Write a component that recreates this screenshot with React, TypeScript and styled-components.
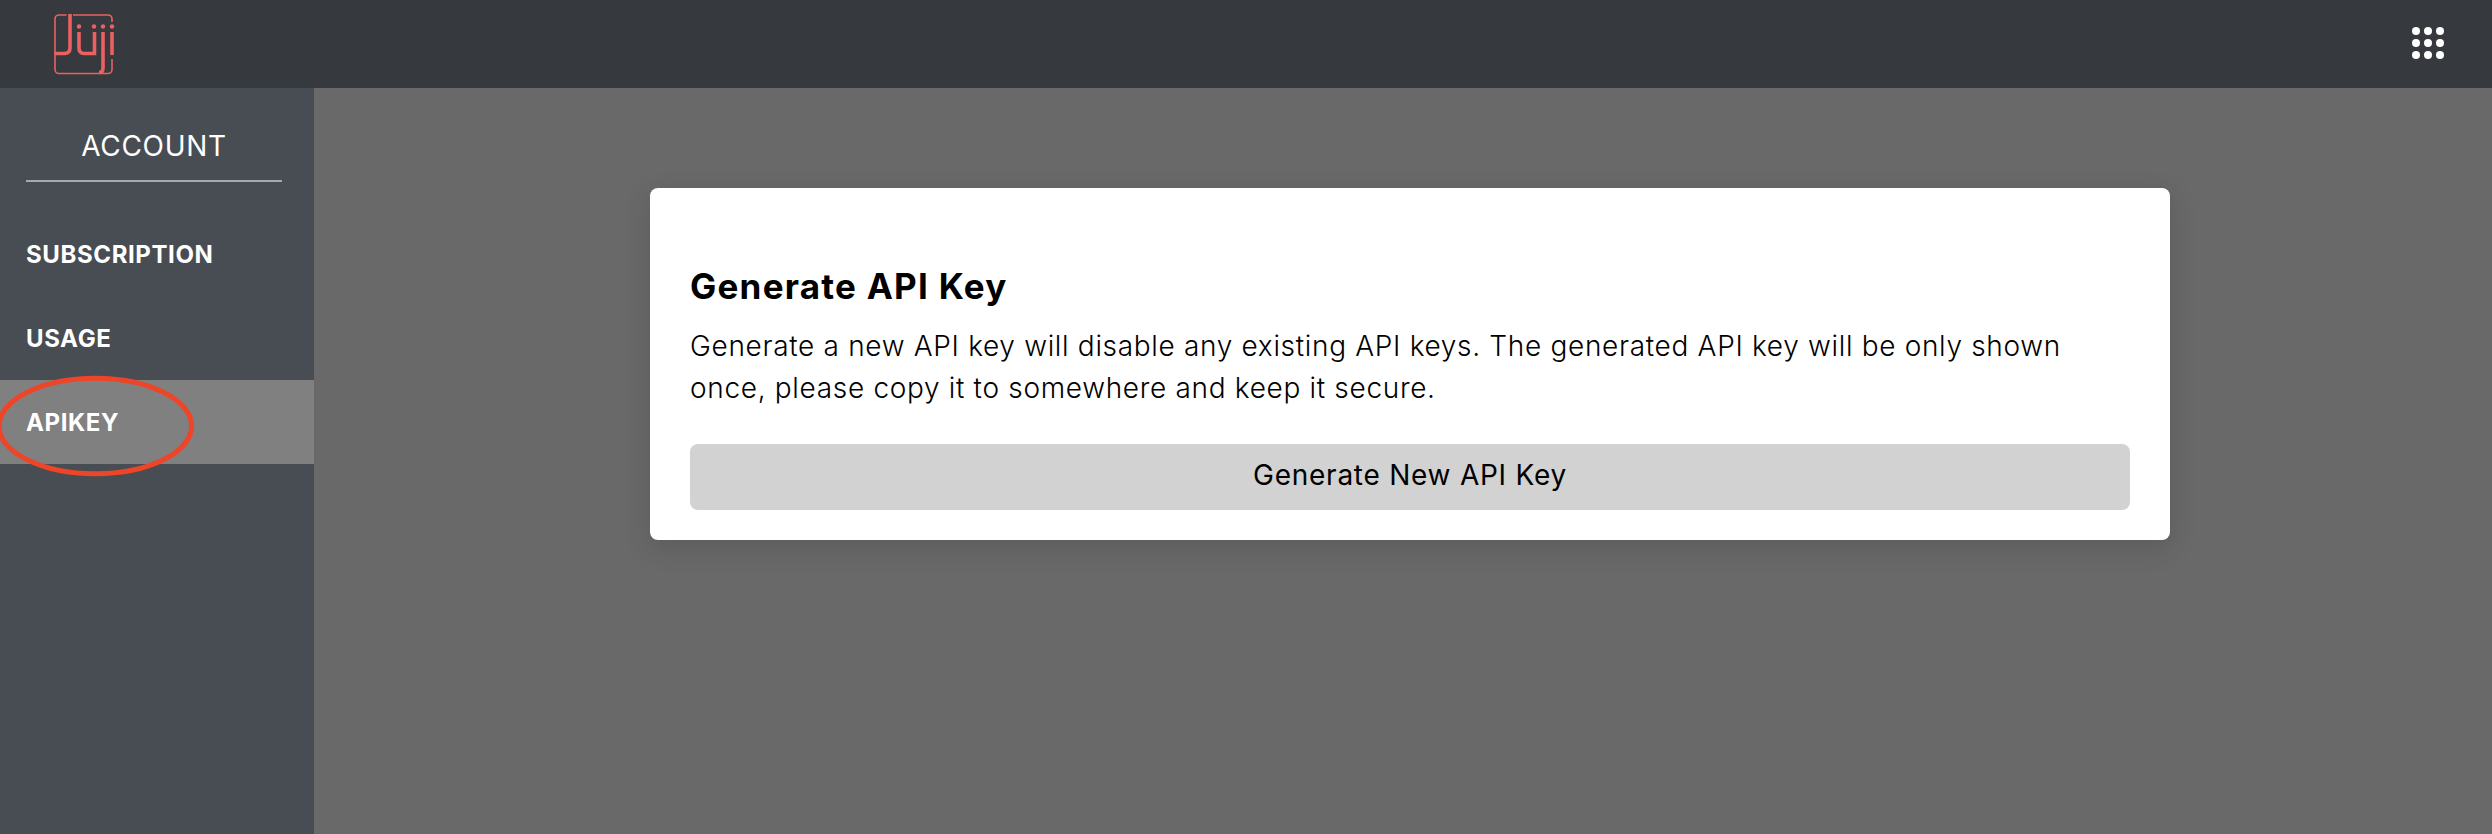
import React from "react";
import styled, { createGlobalStyle } from "styled-components";

const GlobalStyle = createGlobalStyle`
  * { box-sizing: border-box; }
  body { margin: 0; font-family: Inter, "Liberation Sans", sans-serif; color: #000; background: #696969; }
`;

const Page = styled.div`
  position: relative;
  display: flex;
  flex-direction: column;
  height: 834px;
  overflow: hidden;
`;

const Header = styled.header`
  display: flex;
  justify-content: space-between;
  align-items: flex-start;
  flex: none;
  height: 88px;
  padding: 14px 48px 0 53px;
  background: #363a3e;
`;

const Logo = styled.svg`
  width: 62px;
  height: 62px;
`;

const AppsButton = styled.button`
  display: grid;
  grid-template-columns: repeat(3, 8px);
  gap: 4px;
  margin: 13px 0 0;
  padding: 0;
  border: 0;
  background: none;
`;

const Dot = styled.span`
  width: 8px;
  height: 8px;
  border-radius: 50%;
  background: #fff;
`;

const Body = styled.div`
  display: flex;
  flex: 1;
`;

const Sidebar = styled.aside`
  flex: none;
  width: 314px;
  color: #fff;
  background: #484c53;
`;

const SidebarTitle = styled.h1`
  height: 94px;
  margin: 0 32px 30px 26px;
  padding-top: 37px;
  border-bottom: 2px solid #a9a9a9;
  font-size: 28px;
  font-weight: 400;
  line-height: 42px;
  letter-spacing: 0.7px;
  text-align: center;
`;

const NavItem = styled.a<{ $active?: boolean }>`
  display: flex;
  align-items: center;
  height: 84px;
  padding: 0 26px;
  background: ${(p) => (p.$active ? "#808080" : "transparent")};
  font-size: 24px;
  font-weight: 700;
  letter-spacing: 0.6px;
`;

const Main = styled.main`
  display: flex;
  flex: 1;
  justify-content: center;
  align-items: flex-start;
  padding-top: 100px;
  background: #696969;
`;

const Card = styled.section`
  width: 1520px;
  height: 352px;
  margin-left: 14px;
  padding: 76px 40px 30px;
  border-radius: 8px;
  background: #fff;
  box-shadow: 0 8px 24px rgba(46, 46, 56, 0.22);
`;

const CardTitle = styled.h2`
  margin: 0;
  font-size: 35px;
  font-weight: 650;
  line-height: 44px;
  letter-spacing: 1.25px;
`;

const CardText = styled.p`
  margin: 17px 0 0;
  font-size: 28px;
  font-weight: 300;
  line-height: 42px;
  letter-spacing: 0.68px;
  white-space: nowrap;
`;

const GenerateButton = styled.button`
  display: block;
  width: 100%;
  height: 66px;
  margin: 35px 0 0;
  padding: 0 0 5px;
  border: 0;
  border-radius: 8px;
  background: #d2d2d2;
  color: #000;
  font-family: inherit;
  font-size: 28px;
  font-weight: 400;
  letter-spacing: 0.75px;
`;

const Highlight = styled.svg`
  position: absolute;
  left: 0;
  top: 370px;
  width: 200px;
  height: 112px;
  pointer-events: none;
`;

const navItems = ["SUBSCRIPTION", "USAGE", "APIKEY"];

export default function App() {
  return (
    <Page>
      <GlobalStyle />
      <Header>
        <Logo viewBox="0 0 62 62" fill="none" stroke="#ec6062" role="img" aria-label="Juji">
          <path d="M13.500 1H6a4 4 0 0 0-4 4v50.500a4 4 0 0 0 4 4h41" strokeWidth="1.6" />
          <path d="M20 1h35a4 4 0 0 1 4 4v3M59 45v10.500a4 4 0 0 1-4 4h-8" strokeWidth="1.6" />
          <path d="M17 0v34q0 5.500-5.500 5.500H1.500M26 18v16q0 5.500 5 5.500h10.500V18" strokeWidth="3.6" />
          <path d="M50 18v36q0 4.500-4 4.500M59 18v23" strokeWidth="3.600" />
          <g fill="#ec6062" stroke="none">
            <circle cx="26" cy="12.500" r="2.200" />
            <circle cx="41" cy="12.500" r="2.200" />
            <circle cx="50" cy="12.500" r="2.200" />
            <circle cx="59" cy="12.500" r="2.200" />
          </g>
        </Logo>
        <AppsButton aria-label="Apps">
          {Array.from({ length: 9 }, (_, i) => (
            <Dot key={i} />
          ))}
        </AppsButton>
      </Header>
      <Body>
        <Sidebar>
          <SidebarTitle>ACCOUNT</SidebarTitle>
          <nav>
            {navItems.map((item) => (
              <NavItem key={item} $active={item === "APIKEY"}>
                {item}
              </NavItem>
            ))}
          </nav>
        </Sidebar>
        <Main>
          <Card>
            <CardTitle>Generate API Key</CardTitle>
            <CardText>
              Generate a new API key will disable any existing API keys. The generated API key will be only shown
              <br />
              once, please copy it to somewhere and keep it secure.
            </CardText>
            <GenerateButton>Generate New API Key</GenerateButton>
          </Card>
        </Main>
      </Body>
      <Highlight viewBox="0 0 200 112">
        <ellipse cx="95.300" cy="56" rx="96.300" ry="47.800" fill="none" stroke="#ee4427" strokeWidth="5" />
      </Highlight>
    </Page>
  );
}
